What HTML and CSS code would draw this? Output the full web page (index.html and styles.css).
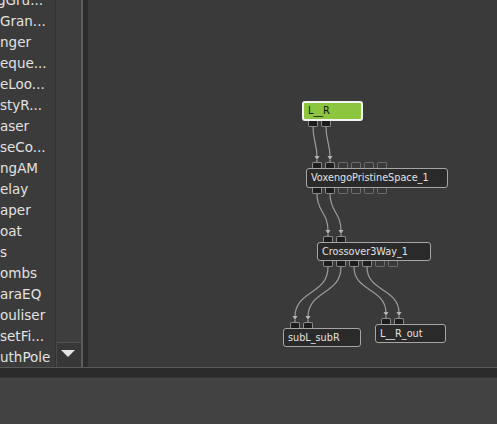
FILE: index.html
```html
<!DOCTYPE html>
<html lang="en">
<head>
  <meta charset="UTF-8">
  <title>Patch Graph</title>
  <link rel="stylesheet" href="styles.css">
</head>
<body>

<div class="app">
  <div class="workspace">
    <div class="browser">
      <ul class="plugins">
        <li class="cut">gGru...</li>
        <li>Gran...</li>
        <li>nger</li>
        <li>eque...</li>
        <li>eLoo...</li>
        <li>styR...</li>
        <li>aser</li>
        <li>seCo...</li>
        <li>ngAM</li>
        <li>elay</li>
        <li>aper</li>
        <li>oat</li>
        <li>s</li>
        <li>ombs</li>
        <li>araEQ</li>
        <li>ouliser</li>
        <li>setFi...</li>
        <li>uthPole</li>
      </ul>
      <div class="scroll">
        <div class="scroll-down"></div>
      </div>
    </div>
    <div class="vsplit"></div>

    <div class="graph">
      <svg class="wires" width="409" height="367" viewBox="0 0 409 367">
        <g fill="none" stroke="#9c9c9c" stroke-width="1.2">
          <path d="M225 127 C225 140, 229 144, 229 157"/>
          <path d="M238 127 C238 140, 242 144, 242 157"/>
          <path d="M229 194 C229 212, 240 212, 240 231"/>
          <path d="M242 194 C242 212, 253 212, 253 231"/>
          <path d="M240 267 C240 295, 207 290, 207 317"/>
          <path d="M253 267 C253 295, 220 290, 220 317"/>
          <path d="M266 267 C266 292, 298 288, 298 313"/>
          <path d="M279 267 C279 292, 311 288, 311 313"/>
        </g>
        <g fill="#b4b4b4">
          <path d="M226.5 156 L231.5 156 L229 160 Z M228.5 160 h1 v2 h-1 Z"/>
          <path d="M239.5 156 L244.5 156 L242 160 Z M241.5 160 h1 v2 h-1 Z"/>
          <path d="M237.5 230 L242.5 230 L240 234 Z M239.5 234 h1 v2 h-1 Z"/>
          <path d="M250.5 230 L255.5 230 L253 234 Z M252.5 234 h1 v2 h-1 Z"/>
          <path d="M204.5 316 L209.5 316 L207 320 Z M206.5 320 h1 v2 h-1 Z"/>
          <path d="M217.5 316 L222.5 316 L220 320 Z M219.5 320 h1 v2 h-1 Z"/>
          <path d="M295.5 312 L300.5 312 L298 316 Z M297.5 316 h1 v2 h-1 Z"/>
          <path d="M308.5 312 L313.5 312 L311 316 Z M310.5 316 h1 v2 h-1 Z"/>
        </g>
      </svg>

      <div class="node node-io node-lr">
        L__R
        <div class="ports out"><span class="port"></span><span class="port"></span></div>
      </div>

      <div class="node node-voxengo">
        VoxengoPristineSpace_1
        <div class="ports in">
          <span class="port"></span><span class="port"></span><span class="port free"></span>
          <span class="port free"></span><span class="port free"></span><span class="port free"></span>
        </div>
        <div class="ports out">
          <span class="port"></span><span class="port"></span><span class="port free"></span>
          <span class="port free"></span><span class="port free"></span><span class="port free"></span>
        </div>
      </div>

      <div class="node node-crossover">
        Crossover3Way_1
        <div class="ports in"><span class="port"></span><span class="port"></span></div>
        <div class="ports out">
          <span class="port"></span><span class="port"></span><span class="port"></span>
          <span class="port"></span><span class="port free"></span><span class="port free"></span>
        </div>
      </div>

      <div class="node node-sub">
        subL_subR
        <div class="ports in"><span class="port"></span><span class="port"></span></div>
      </div>

      <div class="node node-out">
        L__R_out
        <div class="ports in"><span class="port"></span><span class="port"></span></div>
      </div>
    </div>
  </div>
  <div class="hsplit"></div>
  <div class="console"></div>
</div>

</body>
</html>
```

FILE: styles.css
```css
body {
  margin: 0;
  padding: 0;
  background-color: #414141;
  font-family: "DejaVu Sans", Verdana, sans-serif;
}
.app {
  width: 497px;
  height: 424px;
  display: flex;
  flex-direction: column;
  overflow: hidden;
}
.workspace {
  height: 367px;
  display: flex;
}
.browser {
  width: 81px;
  display: flex;
  background-color: #3b3b3b;
}
.plugins {
  list-style: none;
  margin: -10px 0 0 0;
  padding: 0;
  width: 55px;
  border-right: 1px solid #333;
  overflow: hidden;
}
.plugins li {
  height: 21px;
  line-height: 21px;
  font-size: 13.5px;
  color: #e2e2e2;
  white-space: nowrap;
}
.plugins li.cut {
  margin-left: -3px;
}
.scroll {
  width: 25px;
  display: flex;
  flex-direction: column;
  justify-content: flex-end;
  background-color: #3e3e3e;
}
.scroll-down {
  height: 25px;
  box-sizing: border-box;
  border-top: 1px solid #555;
  border-left: 1px solid #4a4a4a;
  background-color: #373737;
  position: relative;
}
.scroll-down::after {
  content: "";
  position: absolute;
  left: 4px;
  top: 7px;
  border-left: 7px solid transparent;
  border-right: 7px solid transparent;
  border-top: 7px solid #e4e4e4;
}
.vsplit {
  width: 7px;
  box-sizing: border-box;
  border-left: 2px solid #5c5c5c;
  background-color: #2c2c2c;
}
.graph {
  flex: 1;
  position: relative;
  background-color: #3a3a3a;
}
.wires {
  position: absolute;
  left: 0;
  top: 0;
}
.hsplit {
  height: 11px;
  box-sizing: border-box;
  border-top: 1px solid #5a5a5a;
  border-bottom: 1px solid #333;
  background-color: #2b2b2b;
}
.console {
  flex: 1;
  background-color: #424242;
}

/* graph nodes */
.node {
  position: absolute;
  box-sizing: border-box;
  height: 19px;
  line-height: 17px;
  padding-left: 4px;
  font-size: 9.7px;
  color: #e2e2e2;
  background-color: #2a2a2a;
  border: 1px solid #a6a6a6;
  border-radius: 3px;
  white-space: nowrap;
}
.node-io {
  background-color: #8cc63f;
  border: 2px solid #f4f4f4;
  color: #111;
  padding-left: 4px;
  line-height: 16px;
}
.node-lr { left: 214px; top: 101px; width: 61px; height: 20px; }
.node-voxengo { left: 218px; top: 168px; width: 142px; height: 20px; line-height: 18px; }
.node-crossover { left: 229px; top: 242px; width: 114px; }
.node-sub { left: 195px; top: 328px; width: 78px; }
.node-out { left: 287px; top: 324px; width: 71px; }

.ports {
  position: absolute;
  left: 5px;
  display: flex;
  gap: 3px;
}
.ports.in { top: -7px; }
.ports.out { bottom: -7px; }
.node-io .ports { left: 4px; }
.node-io .ports.out { bottom: -8px; }
.node-sub .ports { left: 6px; }
.port {
  width: 10px;
  height: 6px;
  box-sizing: border-box;
  border: 1px solid #8a8a8a;
  background-color: #1d1d1d;
}
.ports.in .port { border-bottom: none; border-radius: 2px 2px 0 0; }
.ports.out .port { border-top: none; border-radius: 0 0 2px 2px; }
.port.free {
  border-color: #6c6c6c;
  background-color: #393939;
}
```
